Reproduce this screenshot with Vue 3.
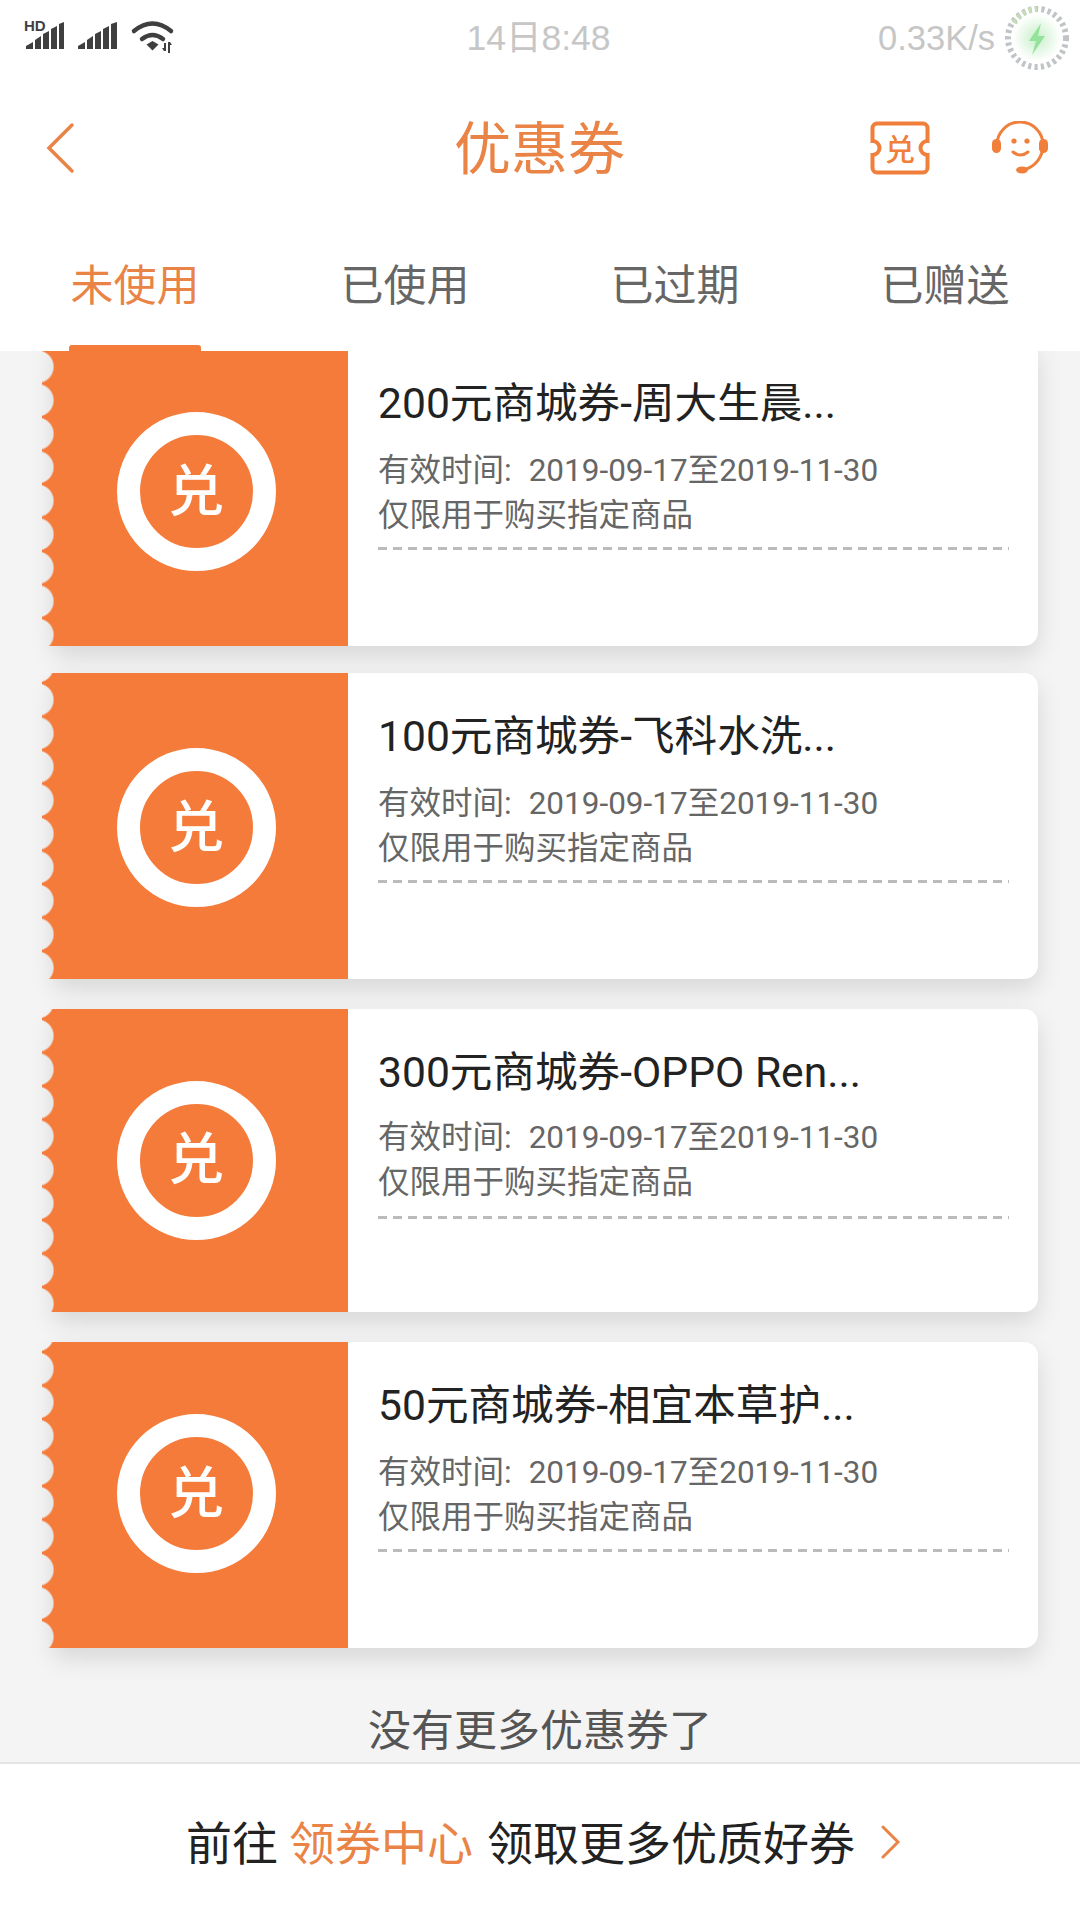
<template>
  <div class="page">
    <header class="header">
      <!-- 状态栏 -->
      <div class="status-bar">
        <svg class="status-left" width="180" height="76" viewBox="0 0 180 76">
          <text x="24" y="31" class="hd">HD</text>
          <g fill="#3f3f3f">
            <path d="M26 49v-3l7-4v7zM35 49v-9l6-4v13zM43 49V34l6-3v18zM51 49V29l6-3v23zM59 49V24l5-2v27z" />
            <path d="M78 49v-3l7-4v7zM87 49v-9l6-4v13zM95 49V34l6-3v18zM103 49V29l6-3v23zM111 49V24l6-2v27z" />
            <path d="M146.500 44.500l6-3.500 6 3.500-6 6z" />
            <path d="M164 43h2v8h-2l-2-3h2zM168 42h2l2 3h-2v8h-2z" />
          </g>
          <g fill="none" stroke="#3f3f3f" stroke-width="4.500" stroke-linecap="round">
            <path d="M134 31q18.500-15 37 0" />
            <path d="M142 39q10.500-8 21 0" />
          </g>
        </svg>
        <span class="status-time">14日8:48</span>
        <div class="status-right">
          <span class="status-speed">0.33K/s</span>
          <svg width="70" height="70" viewBox="0 0 70 70">
            <defs>
              <radialGradient id="glow">
                <stop offset="0%" stop-color="#c7efc9" />
                <stop offset="100%" stop-color="#ffffff" />
              </radialGradient>
            </defs>
            <circle cx="35" cy="35" r="24" fill="url(#glow)" />
            <circle cx="35" cy="35" r="29" fill="none" stroke="#c0c4c6" stroke-width="6" stroke-dasharray="3.2 3.2" />
            <path d="M12 20A29 29 0 0 1 35 6" fill="none" stroke="#c5dcb8" stroke-width="6" stroke-dasharray="3.2 3.2" />
            <path d="M39 20L27 38h7l-4 14 13-19h-7z" fill="#94e29b" />
          </svg>
        </div>
      </div>

      <!-- 标题栏 -->
      <div class="nav-bar">
        <svg class="nav-back" width="30" height="52" viewBox="0 0 30 52">
          <path d="M27 3L4 26l23 23" fill="none" stroke="#ea8446" stroke-width="3.500" stroke-linecap="round" />
        </svg>
        <h1 class="nav-title">优惠券</h1>
        <div class="nav-icons">
          <svg width="60" height="54" viewBox="0 0 60 54">
            <path
              d="M7 2.500h46a4.500 4.500 0 0 1 4.500 4.500v13a7 7 0 0 0 0 14v13a4.500 4.500 0 0 1-4.500 4.500H7A4.500 4.500 0 0 1 2.500 47V34a7 7 0 0 0 0-14V7A4.500 4.500 0 0 1 7 2.500z"
              fill="none" stroke="#f07f3c" stroke-width="4"
            />
            <text x="30" y="39" class="ticket-text">兑</text>
          </svg>
          <svg width="56" height="54" viewBox="0 0 56 54">
            <g fill="#f07f3c">
              <rect x="0" y="18" width="9" height="14" rx="4.500" />
              <rect x="47" y="18" width="9" height="14" rx="4.500" />
              <circle cx="22" cy="20" r="2.600" />
              <circle cx="35" cy="20" r="2.600" />
              <ellipse cx="30" cy="49" rx="6" ry="3.500" />
            </g>
            <g fill="none" stroke="#f07f3c" stroke-width="3" stroke-linecap="round">
              <path d="M5 24A23 23 0 0 1 51 24C51 36 43 46 32 48.500" />
              <path d="M21 31q7.500 6 15 0" />
            </g>
          </svg>
        </div>
      </div>

      <!-- 标签 -->
      <nav class="tabs">
        <div
          v-for="tab in tabs"
          :key="tab"
          class="tab"
          :class="{ active: tab === activeTab }"
        >
          {{ tab }}
        </div>
      </nav>
    </header>

    <main class="coupon-area">
      <div class="coupon-list">
        <div
          v-for="coupon in coupons"
          :key="coupon.title"
          class="coupon"
          :style="{ height: coupon.height + 'px', marginBottom: coupon.gap + 'px' }"
        >
          <div class="coupon-left">
            <div class="coupon-badge">兑</div>
          </div>
          <div class="coupon-body">
            <div class="coupon-title">{{ coupon.title }}</div>
            <div class="coupon-info">
              <span class="coupon-label">有效时间:</span>2019-09-17至2019-11-30
            </div>
            <div class="coupon-info">仅限用于购买指定商品</div>
            <div class="coupon-dash"></div>
          </div>
        </div>
      </div>
      <div class="no-more">没有更多优惠券了</div>
    </main>

    <footer class="footer">
      <span class="footer-lead">前往</span>
      <span class="footer-link">领券中心</span>
      <span>领取更多优质好券</span>
      <svg class="footer-arrow" width="20" height="34" viewBox="0 0 20 34">
        <path d="M2 2l15 15L2 32" fill="none" stroke="#ea8446" stroke-width="3" stroke-linecap="round" />
      </svg>
    </footer>
  </div>
</template>

<script setup>
const tabs = ['未使用', '已使用', '已过期', '已赠送']
const activeTab = '未使用'

const coupons = [
  { title: '200元商城券-周大生晨...', height: 306, gap: 27 },
  { title: '100元商城券-飞科水洗...', height: 306, gap: 30 },
  { title: '300元商城券-OPPO Ren...', height: 303, gap: 30 },
  { title: '50元商城券-相宜本草护...', height: 306, gap: 0 }
]
</script>

<style scoped>
.page {
  width: 1080px;
  height: 1920px;
  display: flex;
  flex-direction: column;
  overflow: hidden;
  background: #f4f4f4;
  font-family: Roboto, "Noto Sans CJK SC", sans-serif;
}

.header {
  background: #fff;
  flex: none;
}

.status-bar {
  height: 76px;
  display: grid;
  grid-template-columns: 1fr auto 1fr;
  align-items: center;
  font-family: "Liberation Sans", "Noto Sans CJK SC", sans-serif;
  font-size: 34.5px;
  color: #c6c6c6;
}

.status-left {
  display: block;
}

.status-time {
  font-size: 35.5px;
  padding: 0 3px 8px 0;
}

.hd {
  font-family: "Liberation Sans", sans-serif;
  font-size: 15px;
  font-weight: 700;
  fill: #3f3f3f;
}

.status-right {
  display: flex;
  align-items: center;
  justify-content: flex-end;
  gap: 7px;
  padding-right: 8px;
}

.nav-bar {
  height: 146px;
  display: grid;
  grid-template-columns: 1fr auto 1fr;
  align-items: center;
  padding: 0 32px 0 45px;
}

.nav-back {
  display: block;
  margin-top: -2px;
}

.nav-title {
  margin: 0;
  font-size: 57px;
  font-weight: 400;
  line-height: 1;
  color: #ea8446;
  position: relative;
  left: -7px;
}

.nav-icons {
  display: flex;
  align-items: center;
  justify-content: flex-end;
  gap: 62px;
  margin-top: -2px;
}

.nav-icons svg {
  display: block;
}

.ticket-text {
  font-family: "Noto Sans CJK SC", sans-serif;
  font-size: 30px;
  font-weight: 500;
  text-anchor: middle;
  fill: #f07f3c;
}

.tabs {
  height: 129px;
  display: flex;
}

.tab {
  flex: 1;
  position: relative;
  display: flex;
  align-items: center;
  justify-content: center;
  padding-bottom: 10px;
  font-size: 43px;
  color: #666;
}

.tab.active {
  color: #ea8446;
}

.tab.active::after {
  content: "";
  position: absolute;
  left: 69px;
  bottom: 0;
  width: 132px;
  height: 6px;
  border-radius: 3px 3px 0 0;
  background: #f57b3a;
}

.coupon-area {
  flex: 1;
  min-height: 0;
  overflow: hidden;
}

.coupon-list {
  margin-top: -11px;
  padding: 0 42px 0 54px;
}

.coupon {
  position: relative;
  display: flex;
  background: #fff;
  border-radius: 0 14px 14px 0;
  box-shadow: 0 10px 24px rgba(0, 0, 0, 0.12);
}

/* 左侧锯齿边 */
.coupon::before {
  content: "";
  position: absolute;
  top: 0;
  bottom: 0;
  left: -12px;
  width: 12px;
  background: radial-gradient(circle 17px at -4.5px 50%, transparent 90%, #f57b3a 100%) 0 10px / 12px 33.5px repeat-y;
}

.coupon-left {
  width: 294px;
  flex: none;
  box-sizing: border-box;
  padding: 0 10px 3px 0;
  display: flex;
  align-items: center;
  justify-content: center;
  background: #f57b3a;
}

.coupon:nth-child(2) .coupon-left {
  padding: 3px 10px 0 0;
}

.coupon:nth-child(3) .coupon-left {
  padding: 0 10px 1px 0;
}

.coupon-badge {
  width: 159px;
  height: 159px;
  box-sizing: border-box;
  border: 23px solid #fff;
  border-radius: 50%;
  display: flex;
  align-items: center;
  justify-content: center;
  font-size: 56px;
  font-weight: 500;
  line-height: 1;
  color: #fff;
}

.coupon-body {
  flex: 1;
  min-width: 0;
  padding: 34px 29px 0 30px;
}

.coupon-title {
  font-size: 42.6px;
  line-height: 58px;
  color: #222;
  margin-bottom: 16px;
  white-space: nowrap;
}

.coupon:nth-child(3) .coupon-title {
  margin-bottom: 14px;
}

.coupon:nth-child(3) .coupon-dash {
  margin-top: 11px;
}

.coupon-info {
  font-size: 31.5px;
  line-height: 45px;
  color: #666;
  white-space: nowrap;
}

.coupon-label {
  margin-right: 17px;
}

.coupon-dash {
  height: 3px;
  margin-top: 9px;
  background: repeating-linear-gradient(to right, #bbb 0, #bbb 9px, transparent 9px, transparent 15px);
}

.no-more {
  margin-top: 53px;
  font-size: 43px;
  line-height: 60px;
  text-align: center;
  color: #555;
}

.footer {
  height: 158px;
  flex: none;
  box-sizing: border-box;
  border-top: 2px solid #e4e4e4;
  padding: 0 0 4px 7px;
  display: flex;
  align-items: center;
  justify-content: center;
  gap: 14px;
  background: #fff;
  font-size: 46px;
  color: #222;
}

.footer-lead {
  margin-right: -3px;
}

.footer-link {
  color: #ea8446;
}

.footer-arrow {
  margin-left: 12px;
  margin-top: 4px;
}
</style>
